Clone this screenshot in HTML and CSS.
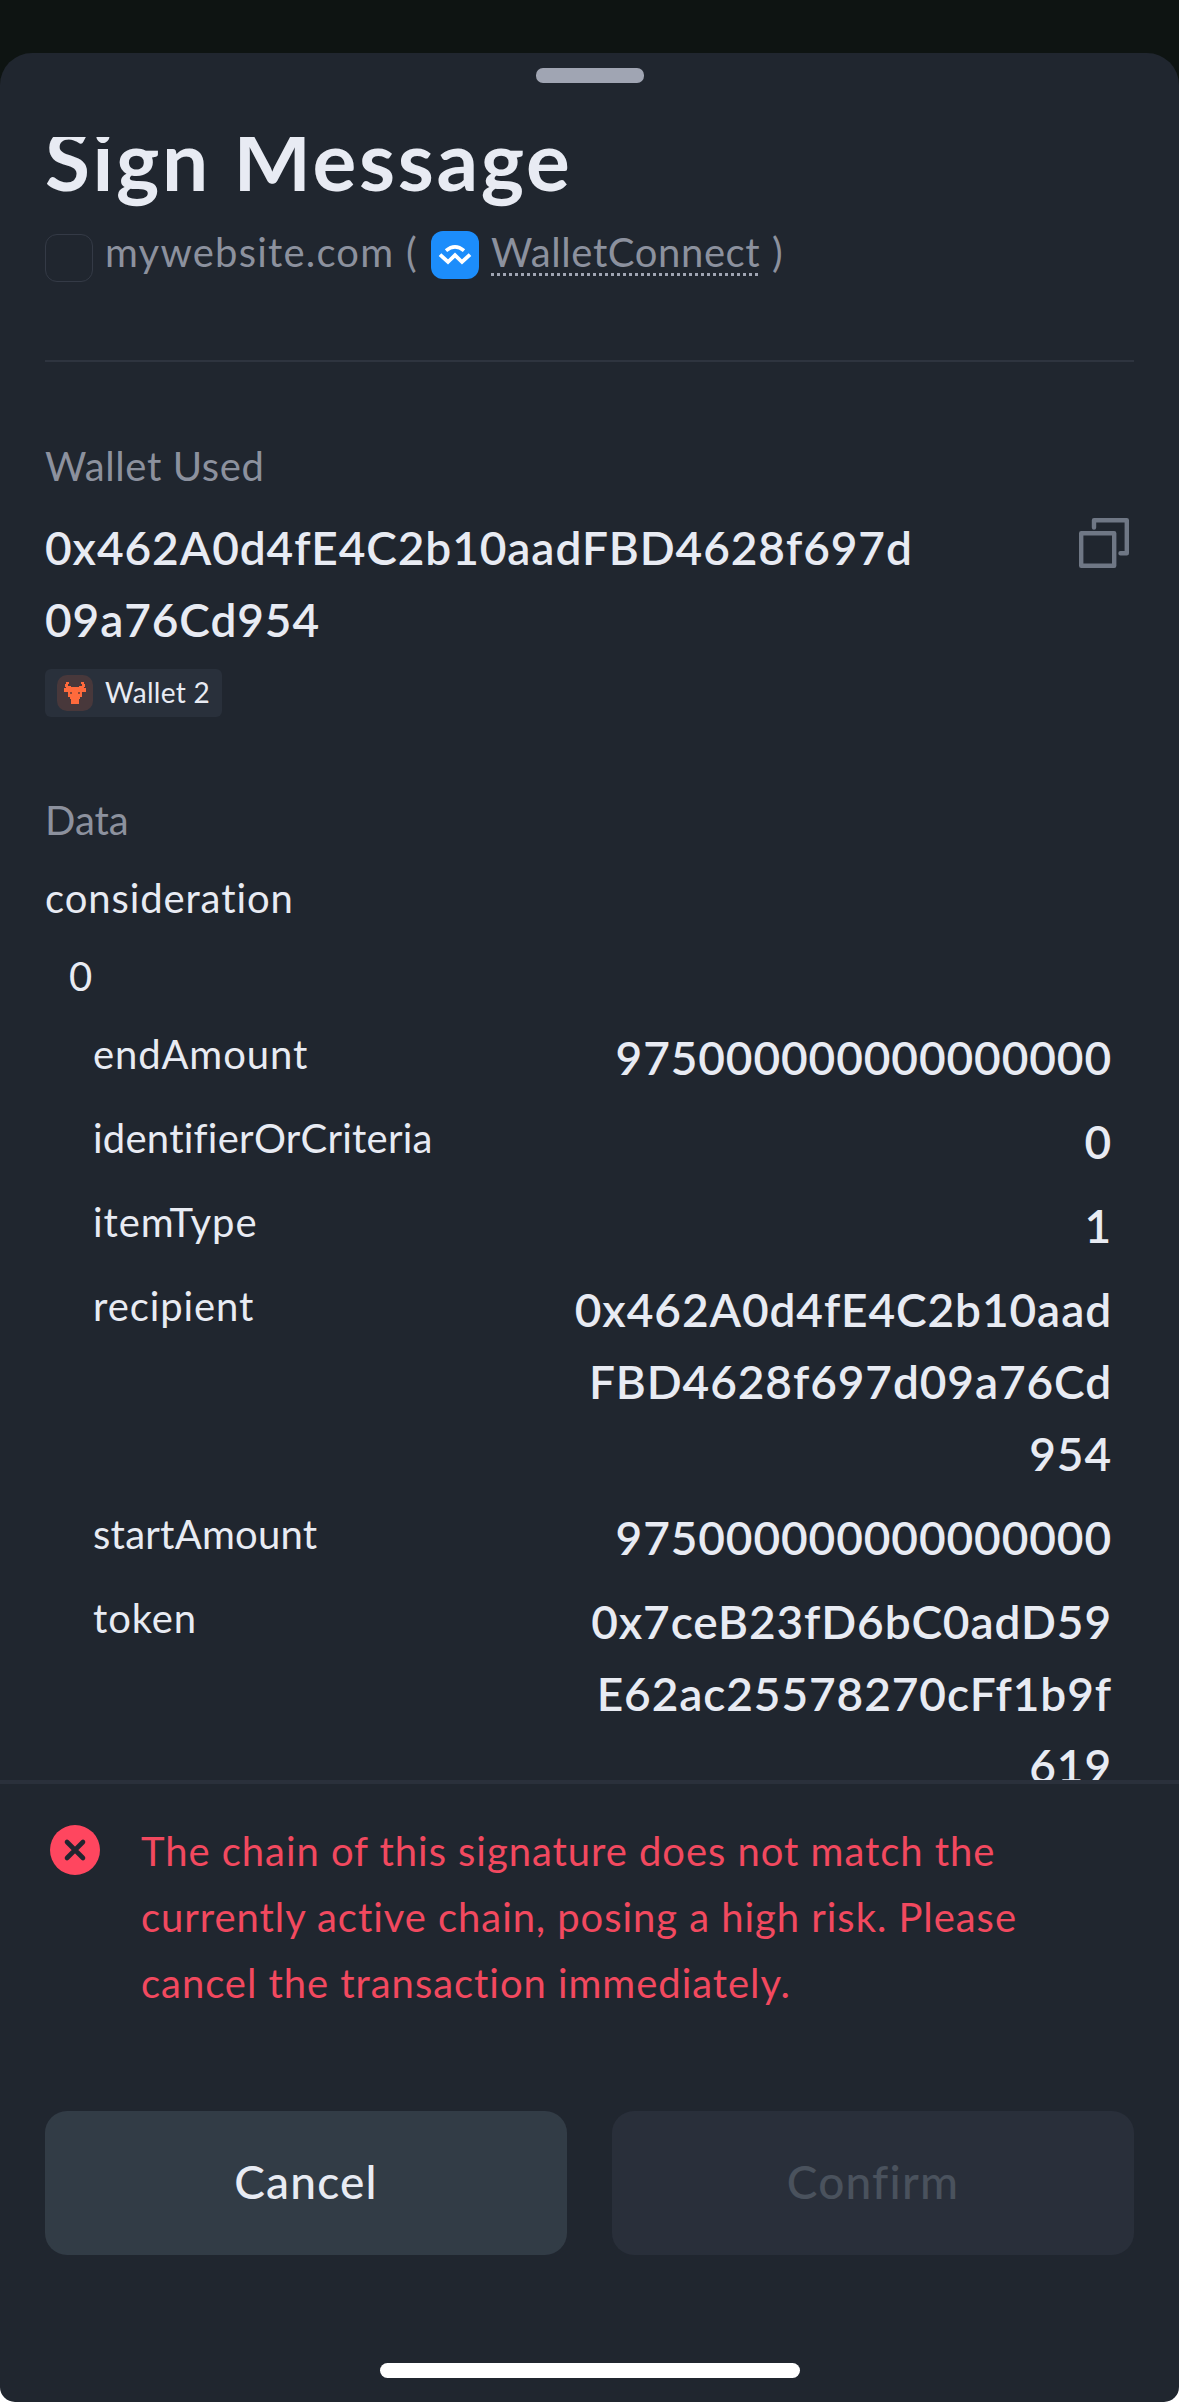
FILE: index.html
```html
<!DOCTYPE html>
<html lang="en">
<head>
<meta charset="UTF-8">
<meta name="viewport" content="width=device-width, initial-scale=1.0">
<title>Sign Message</title>
<link rel="stylesheet" href="styles.css">
</head>
<body>
<div class="sheet">
  <div class="handle"></div>

  <div class="content">
    <h1>Sign Message</h1>
    <div class="origin">
      <span class="site-icon"></span>
      <span class="site-name">mywebsite.com</span>
      <span class="paren">(</span>
      <svg class="wc-icon" viewBox="0 0 48 48">
        <rect width="48" height="48" rx="12" fill="#1c8dfb"/>
        <path d="M15 19.6Q24 12 33 19.6" fill="none" stroke="#fff" stroke-width="3.6"/>
        <path d="M9 23.6L17 31L24 24.2L31 31L39 23.6" fill="none" stroke="#fff" stroke-width="3.8"/>
      </svg>
      <a class="wc-link">WalletConnect</a>
      <span class="paren paren-end">)</span>
    </div>

    <div class="divider"></div>

    <div class="label">Wallet Used</div>
    <div class="wallet">
      <div class="address">0x462A0d4fE4C2b10aadFBD4628f697d<br>09a76Cd954</div>
      <svg class="copy-icon" viewBox="0 0 50 50" fill="none" stroke="#6f7785" stroke-width="4.4" stroke-linecap="round" stroke-linejoin="round">
        <rect x="2.2" y="15.2" width="33" height="32.6"/>
        <path d="M15 9.5V2.2H47.8V35.2H41.5"/>
      </svg>
    </div>
    <div class="chip">
      <svg class="chip-icon" viewBox="0 0 36 36">
        <rect width="36" height="36" rx="10" fill="#48383b"/>
        <path d="M9 7h3v2h-1v2h3v1h8v-1h3V9h-1V7h3v2h1v3h-1v1h2v4h-4v5h-2v2h-1v5h-8v-5h-1v-2h-2v-5H7v-4h2v-1H8V9h1z" fill="#ff6a3c"/>
        <path d="M13 17h2v2h-2zM21 17h2v2h-2z" fill="#8a4636"/>
      </svg>
      <span>Wallet 2</span>
    </div>

    <div class="label data-label">Data</div>
    <div class="key">consideration</div>
    <div class="key index">0</div>
    <div class="rows">
      <div class="row">
        <div class="key">endAmount</div>
        <div class="value">975000000000000000</div>
      </div>
      <div class="row">
        <div class="key key-long">identifierOrCriteria</div>
        <div class="value">0</div>
      </div>
      <div class="row">
        <div class="key">itemType</div>
        <div class="value">1</div>
      </div>
      <div class="row">
        <div class="key">recipient</div>
        <div class="value">0x462A0d4fE4C2b10aad<br>FBD4628f697d09a76Cd<br>954</div>
      </div>
      <div class="row">
        <div class="key key-long">startAmount</div>
        <div class="value">975000000000000000</div>
      </div>
      <div class="row">
        <div class="key">token</div>
        <div class="value">0x7ceB23fD6bC0adD59<br>E62ac25578270cFf1b9f<br>619</div>
      </div>
    </div>
  </div>

  <div class="footer">
    <div class="alert">
      <svg class="alert-icon" viewBox="0 0 50 50">
        <circle cx="25" cy="25" r="25" fill="#ff465f"/>
        <path d="M17 17L33 33M33 17L17 33" stroke="#20252f" stroke-width="4.6" stroke-linecap="round"/>
      </svg>
      <p>The chain of this signature does not match the<br>currently active chain, posing a high risk. Please<br>cancel the transaction immediately.</p>
    </div>
    <div class="buttons">
      <button class="btn cancel">Cancel</button>
      <button class="btn confirm" disabled>Confirm</button>
    </div>
    <div class="home-bar"></div>
  </div>
</div>
</body>
</html>
```
FILE: styles.css
```css
html {
  background: linear-gradient(#0e1412 0, #0e1412 1200px, #fff 1200px);
}
* {
  box-sizing: border-box;
}
body {
  margin: 0;
  padding-top: 53px;
  height: 2402px;
  font-family: "Proxima Nova", Lato, sans-serif;
  font-size: 40px;
  line-height: 60px;
  letter-spacing: 0.9px;
  font-variant-ligatures: none;
  color: #e8ebf3;
  overflow: hidden;
}
.sheet {
  height: 2349px;
  display: flex;
  flex-direction: column;
  background-color: #20262f;
  border-radius: 32px 32px 15px 15px;
}
.handle {
  width: 108px;
  height: 15px;
  margin: 15px auto 54px;
  flex: none;
  border-radius: 7px;
  background-color: #a0a5b3;
}

/* Scrolled area, cut off at the top and at the footer */
.content {
  height: 1643px;
  flex: none;
  overflow: hidden;
  padding: 0 45px;
}
h1 {
  margin: -23px 0 0;
  font-size: 82px;
  line-height: 90px;
  font-weight: 700;
  letter-spacing: 2.7px;
}
.origin {
  display: flex;
  align-items: flex-start;
  height: 60px;
  margin-top: 18px;
  color: #8c919e;
}
.site-icon {
  width: 48px;
  height: 48px;
  margin-top: 12px;
  border: 1px solid #343a46;
  border-radius: 12px;
}
.site-name {
  width: 289px;
  margin-left: 12px;
  letter-spacing: 1.2px;
  white-space: nowrap;
}
.paren {
  width: 15px;
  margin-left: 12px;
}
.wc-icon {
  width: 48px;
  height: 48px;
  margin: 9px 12px 0 10px;
}
.wc-link {
  width: 268px;
  height: 54px;
  letter-spacing: 0.6px;
  white-space: nowrap;
  background: repeating-linear-gradient(90deg, #a0a5b3 0 3px, transparent 3px 6px) 0 100% / 100% 3px no-repeat;
}
.paren-end {
  margin-left: 13px;
}
.divider {
  height: 2px;
  margin: 78px 0 74px;
  background-color: #2e343f;
}
.label {
  color: #8c919e;
  letter-spacing: 0.6px;
}
.wallet {
  display: flex;
  justify-content: space-between;
  margin-top: 16px;
}
.address,
.value {
  font-size: 46px;
  line-height: 72px;
  font-weight: 600;
  letter-spacing: 0.9px;
}
.copy-icon {
  width: 50px;
  height: 50px;
  margin: 6px 5px 0 0;
}
.chip {
  display: flex;
  align-items: center;
  width: 177px;
  height: 48px;
  margin-top: 13px;
  padding-left: 12px;
  gap: 12px;
  font-size: 28px;
  line-height: 44px;
  letter-spacing: 0.3px;
  border-radius: 6px;
  background-color: #29303b;
}
.chip span {
  padding-bottom: 2px;
}
.chip-icon {
  width: 36px;
  height: 36px;
}
.data-label {
  margin: 73px 0 18px;
  letter-spacing: 0;
}
.index {
  margin: 18px 0 16px;
  padding-left: 24px;
}
.rows {
  padding: 0 22px 0 48px;
}
.row {
  display: flex;
  justify-content: space-between;
  margin-bottom: 12px;
}
.row .key {
  padding-top: 2px;
}
.row .key-long {
  letter-spacing: 0.25px;
}
.value {
  text-align: right;
}

.footer {
  border-top: 4px solid #2a303b;
  padding: 34px 45px 0;
}
.alert {
  display: flex;
  padding-left: 5px;
  color: #f2495f;
}
.alert-icon {
  width: 50px;
  height: 50px;
  margin: 7px 41px 0 0;
}
.alert p {
  margin: 0;
  line-height: 66px;
  letter-spacing: 0.95px;
  white-space: nowrap;
}
.buttons {
  display: flex;
  gap: 45px;
  margin-top: 95px;
}
.btn {
  flex: 1;
  height: 144px;
  padding: 0 0 3px;
  border: none;
  border-radius: 22px;
  font: 500 46px/60px "Proxima Nova", Lato, sans-serif;
  letter-spacing: 1.2px;
}
.cancel {
  background-color: #323c46;
  color: #e8ebf3;
}
.confirm {
  background-color: #292f3a;
  color: #4a525d;
}
.home-bar {
  width: 420px;
  height: 15px;
  margin: 108px auto 0;
  border-radius: 8px;
  background-color: #fff;
}
```
